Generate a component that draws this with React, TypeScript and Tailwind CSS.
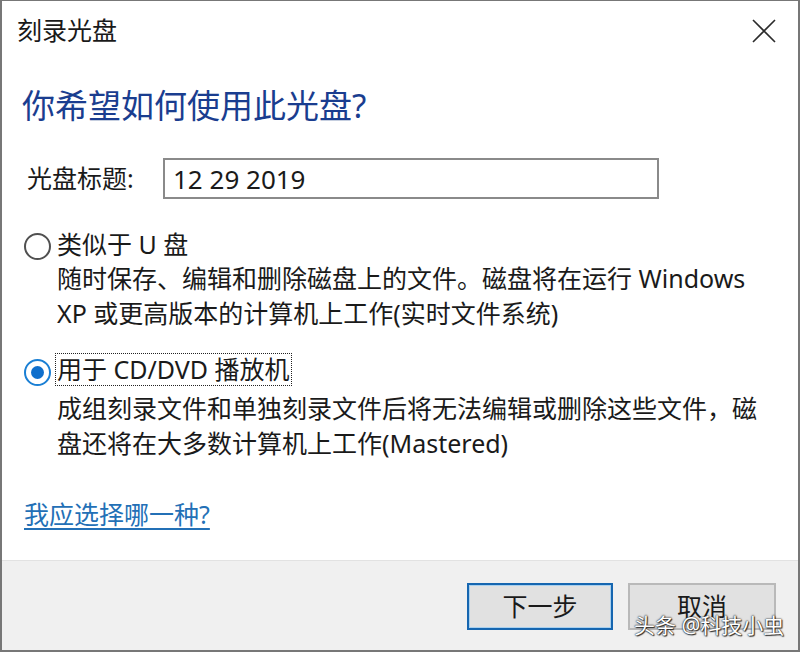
import React from "react";

const font = "font-['Noto_Sans','Noto_Sans_CJK_SC',sans-serif]";

function CloseIcon() {
  return (
    <svg width="24" height="24" viewBox="0 0 24 24" className="block">
      <path d="M1 1 L23 23 M23 1 L1 23" stroke="#2b2b2b" strokeWidth="1.6" fill="none" />
    </svg>
  );
}

function Radio({ checked }: { checked?: boolean }) {
  if (checked) {
    return (
      <span className="flex h-[27px] w-[27px] items-center justify-center rounded-full border-2 border-[#1a7fd4]">
        <span className="h-[13px] w-[13px] rounded-full bg-[#0f6fcc]" />
      </span>
    );
  }
  return <span className="block h-[27px] w-[27px] rounded-full border-2 border-[#505050]" />;
}

function DialogButton({ label, primary }: { label: string; primary?: boolean }) {
  return (
    <button
      className={
        primary
          ? "h-[47px] w-[146px] border-2 border-[#1666b0] bg-[#e1e1e1] text-[25px] leading-none text-[#1a1a1a] shadow-[inset_0_0_0_1px_#a9d0ee]"
          : "h-[47px] w-[148px] border-2 border-[#b9b9b9] bg-[#e1e1e1] text-[25px] leading-none text-[#1a1a1a]"
      }
    >
      {label}
    </button>
  );
}

export default function App() {
  return (
    <div
      className={`${font} relative flex h-[652px] w-[800px] flex-col border-t border-r-2 border-b-2 border-l-2 border-[#777] bg-white text-[#1a1a1a]`}
    >
      {/* title bar */}
      <div className="flex h-[59px] items-center justify-between pr-[22px] pl-[15px]">
        <span className="text-[25px] leading-none">刻录光盘</span>
        <CloseIcon />
      </div>

      <div className="flex-1 pl-[20px]">
        <h1 className="mt-[24px] text-[33px] leading-[44px] font-normal text-[#1a3d8f]">
          你希望如何使用此光盘?
        </h1>

        <div className="mt-[30px] flex items-center">
          <span className="w-[141px] pl-[5px] text-[25px] leading-none">光盘标题:</span>
          <div className="flex h-[41px] w-[496px] items-center border-2 border-[#8a8a8a] pl-[8px] text-[26px] leading-none">
            12 29 2019
          </div>
        </div>

        <div className="mt-[28px] flex text-[25px]">
          <div className="w-[35px] pt-[6px] pl-[2px]">
            <Radio />
          </div>
          <div>
            <div className="leading-[34px]">类似于 U 盘</div>
            <div className="leading-[35px] whitespace-nowrap">
              随时保存、编辑和删除磁盘上的文件。磁盘将在运行 Windows
              <br />
              XP 或更高版本的计算机上工作(实时文件系统)
            </div>
          </div>
        </div>

        <div className="mt-[20px] flex text-[25px]">
          <div className="w-[35px] pt-[8px] pl-[2px]">
            <Radio checked />
          </div>
          <div>
            <span className="-ml-[2px] inline-block border border-dotted border-[#222] pr-[1px] pl-[1px] leading-[31px]">
              用于 CD/DVD 播放机
            </span>
            <div className="mt-[2px] leading-[35px] whitespace-nowrap">
              成组刻录文件和单独刻录文件后将无法编辑或删除这些文件，磁
              <br />
              盘还将在大多数计算机上工作(Mastered)
            </div>
          </div>
        </div>

        <a className="mt-[36px] inline-block pl-[2px] text-[25px] leading-[34px] text-[#2370b6] underline underline-offset-[4px]">
          我应选择哪一种?
        </a>
      </div>

      {/* footer with the two dialog buttons */}
      <div className="flex h-[90px] justify-end gap-[15px] border-t border-[#e2e2e2] bg-[#f0f0f0] pt-[22px] pr-[22px]">
        <DialogButton label="下一步" primary />
        <DialogButton label="取消" />
      </div>

      <span className="absolute top-[609px] left-[632px] text-[21px] leading-[30px] whitespace-nowrap text-white [text-shadow:0_0_2px_#222,0_0_1px_#222,1px_1px_1px_#333]">
        头条 @科技小虫
      </span>
    </div>
  );
}
